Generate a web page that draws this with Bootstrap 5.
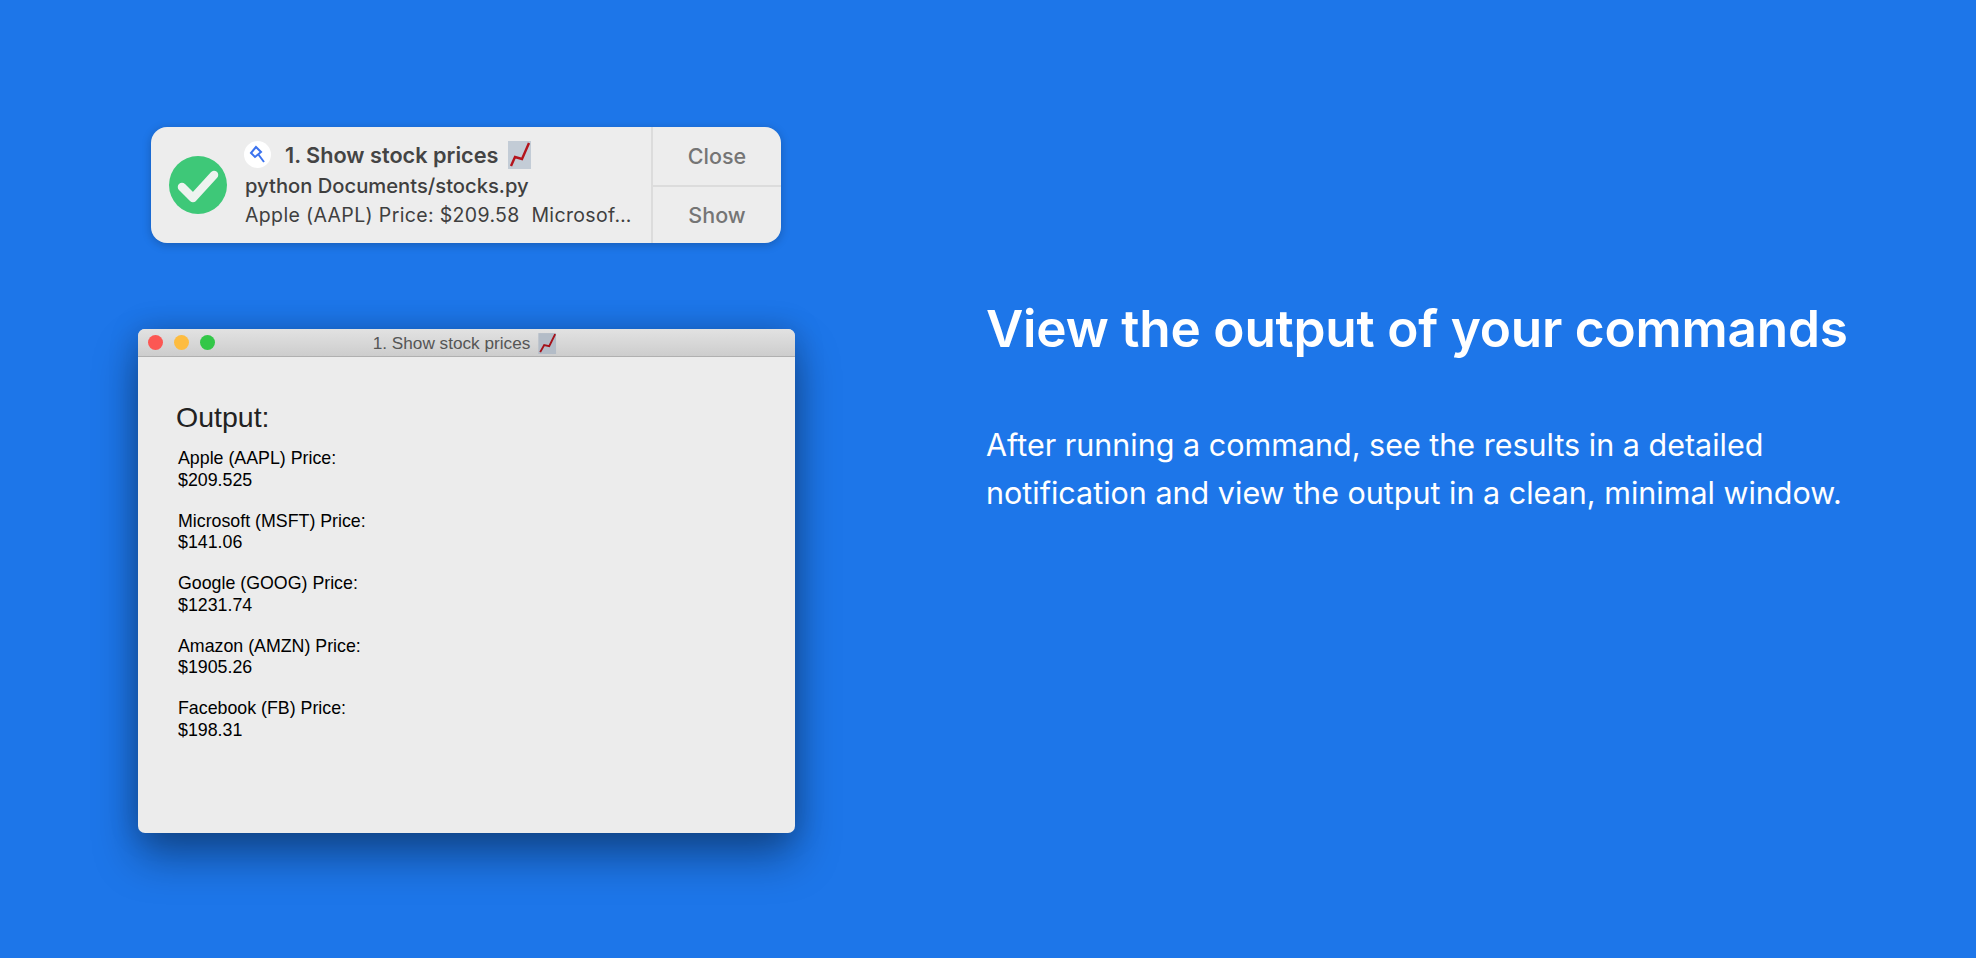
<!DOCTYPE html>
<html lang="en"><head><meta charset="utf-8"><title>View the output</title>
<link href="https://cdn.jsdelivr.net/npm/bootstrap@5.3.0/dist/css/bootstrap.min.css" rel="stylesheet">
<style>
html,body{height:100%}
body{background:#1d76e9;font-family:Inter,"Liberation Sans",sans-serif;overflow:hidden}
.stage{height:958px;width:1976px}
.leftcol{width:986px;padding:127px 0 0 138px;flex:none}
.notif{width:630px;height:116px;margin-left:13px;background:#ededed;border-radius:16px;box-shadow:0 2px 10px rgba(0,0,0,.22);color:#3f3f3f}
.notif-main{min-width:0;padding-left:18px}
.okicon{width:58px;height:58px;flex:none}
.nt-body{padding-left:18px;min-width:0}
.nt-title{font-size:21.7px;font-weight:600;line-height:28px;height:32px;color:#444;margin-top:-2px;margin-bottom:1px}
.appdot{width:27px;height:27px;flex:none;margin-right:14px;margin-left:-1px}
.chart{flex:none;margin-left:2px}
.nt-sub{font-size:20.2px;font-weight:550;line-height:28px;white-space:nowrap}
.nt-msg{font-size:19.5px;line-height:30px;white-space:nowrap;letter-spacing:.35px}
.nt-acts{width:130px;border-left:2px solid #dcdcdc}
.nt-act{font-size:21.5px;font-weight:550;color:#757575;height:50%}
.nt-act+.nt-act{border-top:2px solid #dcdcdc}
.win{width:657px;height:504px;margin-top:86px;background:#ececec;border-radius:7px;box-shadow:0 24px 44px rgba(0,0,0,.36),0 0 30px rgba(0,0,0,.18)}
.win-bar{height:28px;background:linear-gradient(#e2e2e2,#cdcdcd);border-bottom:1px solid #b0b0b0;border-radius:7px 7px 0 0;padding-left:10px}
.dot{width:15px;height:15px;border-radius:50%;margin-right:11px}
.dot-r{background:#fc5753}.dot-y{background:#fdbc40}.dot-g{background:#33c748}
.win-title{font-size:17.2px;color:#555;font-family:"Liberation Sans",sans-serif;margin-top:1px;margin-left:-2px}
.win-body{padding:44px 0 0 38px;font-family:"Liberation Sans",sans-serif;color:#000}
.out-h{font-size:28.5px;font-weight:400;line-height:32px;color:#222;margin:0 0 15px}
.out-p{font-size:17.8px;line-height:21.5px;margin:0 0 19.5px 2px}
.rightcol{padding-top:290px;color:#fff;width:900px}
.hd{font-size:51.3px;font-weight:600;line-height:76px;margin:0 0 55px;white-space:nowrap;letter-spacing:-.2px}
.pp{font-size:30.5px;line-height:48px;margin:0;white-space:nowrap}
</style></head>
<body>
<div class="stage d-flex">
 <div class="leftcol">
  <div class="notif d-flex">
   <div class="notif-main d-flex align-items-center flex-grow-1">
    <svg class="okicon" viewBox="0 0 58 58"><circle cx="29" cy="29" r="29" fill="#3ec878"/><path d="M13 31l11 11 21-23" fill="none" stroke="#eef3ef" stroke-width="8.5" stroke-linecap="round" stroke-linejoin="round"/></svg>
    <div class="nt-body">
     <div class="nt-title d-flex align-items-center">
      <svg class="appdot" viewBox="0 0 27 27"><circle cx="13.5" cy="13.5" r="13.5" fill="#fff"/><path d="M12 6l-5 6 4 4 6-5zM14 13l6 8" fill="none" stroke="#3c73ee" stroke-width="2"/></svg>
      <span class="me-2">1. Show stock prices</span>
      <svg class="chart" width="23" height="28" viewBox="0 0 23 28"><rect width="23" height="28" fill="#c3ccd6"/><path d="M3 25l4-9 7 2 7-16" fill="none" stroke="#b4141c" stroke-width="2.4"/></svg>
     </div>
     <div class="nt-sub">python Documents/stocks.py</div>
     <div class="nt-msg">Apple (AAPL) Price: $209.58&nbsp; Microsof…</div>
    </div>
   </div>
   <div class="nt-acts d-flex flex-column flex-shrink-0">
    <div class="nt-act d-flex align-items-center justify-content-center">Close</div>
    <div class="nt-act d-flex align-items-center justify-content-center">Show</div>
   </div>
  </div>
  <div class="win">
   <div class="win-bar position-relative d-flex align-items-center">
    <span class="dot dot-r"></span><span class="dot dot-y"></span><span class="dot dot-g"></span>
    <div class="win-title position-absolute top-50 start-50 translate-middle d-flex align-items-center text-nowrap">1. Show stock prices
     <svg class="ms-2" width="18" height="21" viewBox="0 0 18 21"><rect width="18" height="21" fill="#b3bcc7"/><path d="M2 19l4-7 5 1 6-12" fill="none" stroke="#a5121a" stroke-width="1.9"/></svg>
    </div>
   </div>
   <div class="win-body">
    <h2 class="out-h">Output:</h2>
    <p class="out-p">Apple (AAPL) Price:<br>$209.525</p>
    <p class="out-p">Microsoft (MSFT) Price:<br>$141.06</p>
    <p class="out-p">Google (GOOG) Price:<br>$1231.74</p>
    <p class="out-p">Amazon (AMZN) Price:<br>$1905.26</p>
    <p class="out-p">Facebook (FB) Price:<br>$198.31</p>
   </div>
  </div>
 </div>
 <div class="rightcol">
  <h1 class="hd">View the output of your commands</h1>
  <p class="pp">After running a command, see the results in a detailed<br>notification and view the output in a clean, minimal window.</p>
 </div>
</div>
<script src="https://cdn.jsdelivr.net/npm/bootstrap@5.3.0/dist/js/bootstrap.bundle.min.js"></script>
</body></html>
